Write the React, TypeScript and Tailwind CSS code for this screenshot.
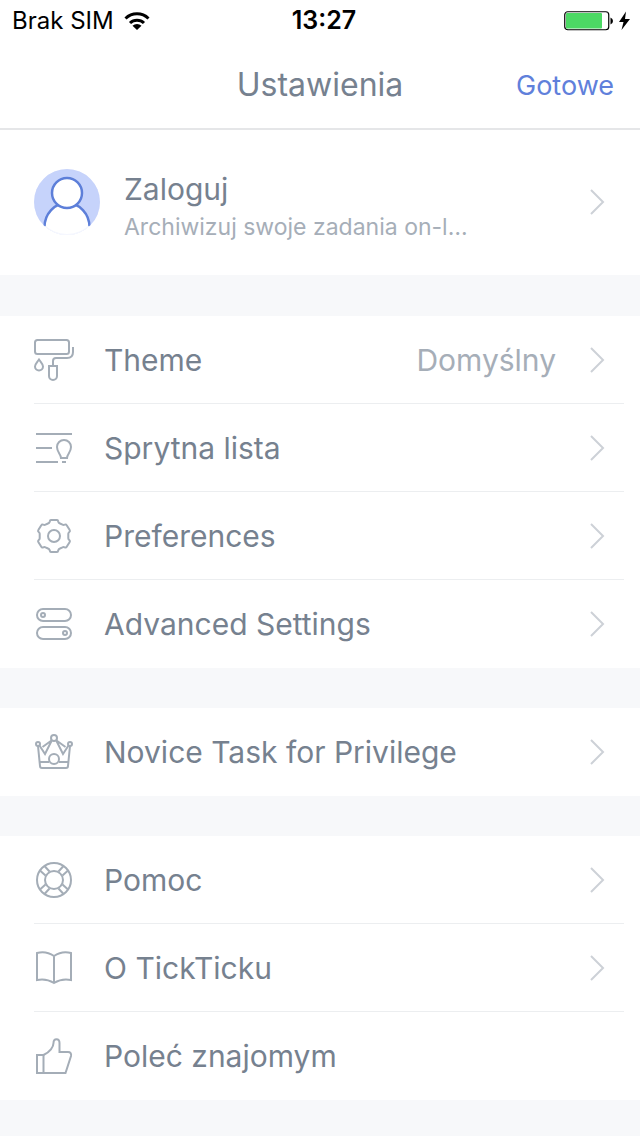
import type { ReactNode } from "react";

type Item = {
  label: string;
  icon: ReactNode;
  value?: string;
  chevron?: boolean;
};

function LineIcon({ children }: { children: ReactNode }) {
  return (
    <svg viewBox="0 0 44 44" fill="none" stroke="#a4adb7" strokeWidth="2" className="size-11 shrink-0" aria-hidden="true">
      {children}
    </svg>
  );
}

function Chevron() {
  return (
    <svg viewBox="0 0 16 28" fill="none" stroke="#cdd1d7" strokeWidth="2" className="h-7 w-4 shrink-0" aria-hidden="true">
      <path d="M1 2 13 14 1 26" />
    </svg>
  );
}

const rollerIcon = (
  <LineIcon>
    <rect x="3" y="2" width="34" height="14" rx="2.5" />
    <path d="M41 9v5q0 6-6 6H24q-3 0-3 3v5" />
    <path d="M17 28h8v10a4 4 0 0 1-8 0Z" />
    <path d="M7 21.500c2 3 4 4.500 4 7a4 4 0 0 1-8 0c0-2.500 2-4 4-7Z" />
  </LineIcon>
);

const smartListIcon = (
  <LineIcon>
    <path d="M4 8h36M4 22h16M4 36h22M30 36h4" />
    <path d="M29 32c0-4-4-5.500-4-11a7 7 0 0 1 14 0c0 5.500-4 7-4 11Z" />
  </LineIcon>
);

const gearIcon = (
  <LineIcon>
    <path
      strokeLinejoin="round"
      d="M19 6h6q1 0 1.200 1.500Q26.500 9 28 9.500l2.500 1.200q1 .6 2.200 0q1.300-.7 2 .5l3 4.800q.7 1-.4 2-1 .8-1 1.800v4.400q0 1 1 1.800 1.100 1 .4 2l-3 4.800q-.7 1.200-2 .5-1.200-.6-2.200 0L28 34.500q-1.500.5-1.800 2Q26 38 25 38h-6q-1 0-1.200-1.500-.3-1.500-1.800-2l-2.500-1.200q-1-.6-2.200 0-1.300.7-2-.5l-3-4.800q-.7-1 .4-2 1-.8 1-1.800v-4.400q0-1-1-1.800-1.100-1-.4-2l3-4.800q.7-1.200 2-.5 1.200.6 2.200 0L16 9.500q1.500-.5 1.800-2Q18 6 19 6Z"
    />
    <circle cx="22" cy="22" r="6" />
  </LineIcon>
);

const togglesIcon = (
  <LineIcon>
    <rect x="5" y="7" width="34" height="12" rx="6" />
    <rect x="5" y="25" width="34" height="12" rx="6" />
    <circle cx="11" cy="13" r="2" />
    <circle cx="33" cy="31" r="2" />
  </LineIcon>
);

const crownIcon = (
  <LineIcon>
    <circle cx="22" cy="8" r="3" />
    <circle cx="6" cy="14" r="2" />
    <circle cx="38" cy="14" r="2" />
    <path d="M6 16 8 36q0 2 2 2h24q2 0 2-2l2-20" />
    <path d="M7.500 15.500 13 24l6.500-13M36.500 15.500 31 24l-6.500-13M19.500 10.500 10.500 17M24.500 10.500l9 6.500" />
    <path d="M8 32h9M27 32h9" />
    <circle cx="22" cy="29" r="5" />
  </LineIcon>
);

const helpIcon = (
  <LineIcon>
    <circle cx="22" cy="22" r="17" />
    <circle cx="22" cy="22" r="9" />
    <path d="m8 12.500 5.500 5M12.500 8l5 5.500M36 12.500l-5.500 5M31.500 8l-5 5.500M8 31.500l5.500-5M12.500 36l5-5.500M36 31.500l-5.500-5M31.500 36l-5-5.500" />
  </LineIcon>
);

const bookIcon = (
  <LineIcon>
    <path d="M5 7q9-2.500 17 3 8-5.500 17-3v27q-9-2-17 3-8-5-17-3ZM22 10v27" />
  </LineIcon>
);

const thumbIcon = (
  <LineIcon>
    <path d="M5 21h6.500v18H5Z" />
    <path d="M11.500 21C18 18 21.500 13 21.500 9c0-5 6-5 6 0v9H36c2.500 0 3.500 1.500 3 4l-5.500 17h-22" />
  </LineIcon>
);

const groups: Item[][] = [
  [
    { label: "Theme", icon: rollerIcon, value: "Domyślny", chevron: true },
    { label: "Sprytna lista", icon: smartListIcon, chevron: true },
    { label: "Preferences", icon: gearIcon, chevron: true },
    { label: "Advanced Settings", icon: togglesIcon, chevron: true },
  ],
  [{ label: "Novice Task for Privilege", icon: crownIcon, chevron: true }],
  [
    { label: "Pomoc", icon: helpIcon, chevron: true },
    { label: "O TickTicku", icon: bookIcon, chevron: true },
    { label: "Poleć znajomym", icon: thumbIcon },
  ],
];

function StatusBar() {
  return (
    <div className="grid h-10 grid-cols-[1fr_auto_1fr] items-center pl-3 pr-2 pt-0.5 text-2xl text-black">
      <div className="flex items-center gap-2.5">
        <span>Brak SIM</span>
        <svg viewBox="0 0 26 20" className="h-5 w-[26px]" fill="none" stroke="#000" strokeWidth="3" aria-label="Wi-Fi">
          <path d="M1.500 7.500a16.500 16.500 0 0 1 23 0M6 12a10 10 0 0 1 14 0" />
          <path d="M8.500 14.800a6.500 6.500 0 0 1 9 0L13 19Z" fill="#000" stroke="none" />
        </svg>
      </div>
      <span className="pl-1 text-[25px] font-semibold">13:27</span>
      <svg viewBox="0 0 68 20" className="h-5 w-[68px] justify-self-end" aria-label="Battery charging">
        <rect x="0.750" y="0.750" width="44" height="18" rx="3" fill="none" stroke="#000" strokeWidth="1.200" />
        <rect x="2" y="2" width="36" height="15.500" rx="1" fill="#4cd964" />
        <path d="M46.500 6.500q2.500 1 2.500 3.500t-2.500 3.500Z" />
        <path d="M62 0.500 55 11h4.500L57.500 19 66 8h-5Z" />
      </svg>
    </div>
  );
}

function Avatar() {
  return (
    <svg viewBox="0 0 66 66" className="size-[66px] shrink-0" aria-hidden="true">
      <defs>
        <clipPath id="avatar-clip">
          <circle cx="33" cy="33" r="33" />
        </clipPath>
      </defs>
      <g clipPath="url(#avatar-clip)">
        <rect width="66" height="66" fill="#c6d3fb" />
        <path d="M10 58a23 24 0 0 1 46 0v8H10Z" fill="#fff" />
        <path d="M10.500 58a22.500 24 0 0 1 45 0" fill="none" stroke="#5d7fd9" strokeWidth="2.500" />
        <path d="M0 57h66v9H0Z" fill="#fff" />
        <circle cx="33" cy="24" r="15" fill="#fff" stroke="#5d7fd9" strokeWidth="2.500" />
      </g>
      <circle cx="33" cy="33" r="32.500" fill="none" stroke="#c6d3fb" strokeOpacity="0.200" />
    </svg>
  );
}

function SettingsRow({ item }: { item: Item }) {
  return (
    <li className="group">
      <button type="button" className="flex h-[88px] w-full flex-col pl-[34px] pr-4 text-left">
        <span className="flex w-full flex-1 items-center border-b border-[#eceef0] pr-[18px] group-last:border-transparent">
          <span className="-ml-0.5 flex">{item.icon}</span>
          <span className="ml-7 flex-1 text-3xl text-[#76818f]">{item.label}</span>
          {item.value ? <span className="mr-[34px] text-3xl text-[#a6aeb8]">{item.value}</span> : null}
          {item.chevron ? <Chevron /> : null}
        </span>
      </button>
    </li>
  );
}

export default function App() {
  return (
    <div className="min-h-screen bg-[#f7f8fa] font-['Inter','Liberation_Sans',sans-serif]">
      <header className="border-b-2 border-[#e5e6e8] bg-white">
        <StatusBar />
        <div className="grid h-[88px] grid-cols-[1fr_auto_1fr] items-center px-[26px]">
          <h1 className="col-start-2 pt-0.5 text-[32px] text-[#76818f]">Ustawienia</h1>
          <button type="button" className="justify-self-end pt-1 text-[27px] text-[#6080db]">
            Gotowe
          </button>
        </div>
      </header>

      <main className="flex flex-col gap-10">
        <button type="button" className="mb-px flex h-[145px] w-full items-center bg-white px-[34px] pb-0.5 text-left">
          <Avatar />
          <span className="ml-6 flex min-w-0 flex-1 flex-col pt-3.5">
            <span className="text-3xl leading-9 text-[#76818f]">Zaloguj</span>
            <span className="text-[23px] leading-10 text-[#a6aeb8]">Archiwizuj swoje zadania on-l…</span>
          </span>
          <Chevron />
        </button>

        {groups.map((group) => (
          <ul key={group[0].label} className="bg-white">
            {group.map((item) => (
              <SettingsRow key={item.label} item={item} />
            ))}
          </ul>
        ))}
      </main>
    </div>
  );
}
